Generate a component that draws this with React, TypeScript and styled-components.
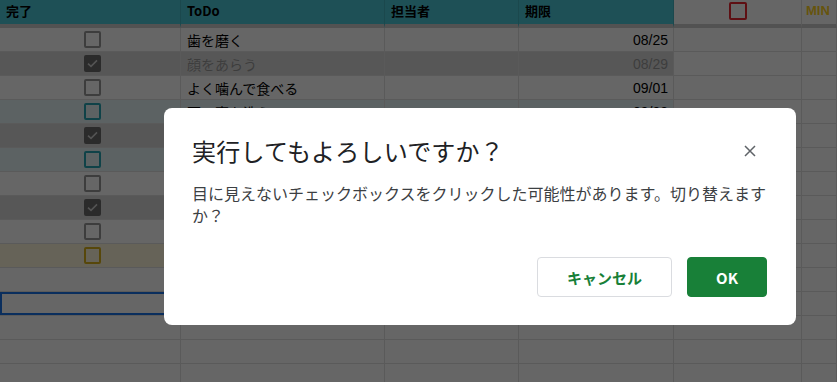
import React from "react";
import styled, { createGlobalStyle, css } from "styled-components";

const GlobalStyle = createGlobalStyle`
  html, body { margin: 0; padding: 0; background: #ffffff; overflow: hidden; }
  * { box-sizing: border-box; }
`;

type Tone = "plain" | "done" | "teal" | "yellow";
type BoxKind = "grey" | "checked" | "teal" | "yellow" | "none";

const toneBg: Record<Tone, string> = {
  plain: "#ffffff",
  done: "#dadada",
  teal: "#e6f6f8",
  yellow: "#fef7dc",
};

const Page = styled.div`
  position: relative;
  width: 837px;
  height: 382px;
  overflow: hidden;
  background: #ffffff;
  font-family: "Noto Sans CJK JP", "Noto Sans", sans-serif;
`;

const Sheet = styled.div`
  display: grid;
  grid-template-columns: 181px 204px 134px 155px 128px 35px;
  grid-template-rows: 28px;
  grid-auto-rows: 24px;
`;

const HeadCell = styled.div<{ $teal?: boolean; $center?: boolean }>`
  height: 28px;
  display: flex;
  align-items: center;
  justify-content: ${(p) => (p.$center ? "center" : "flex-start")};
  padding: 0 6px 4px;
  background: ${(p) => (p.$teal ? "#4cc8d8" : "#ffffff")};
  border-right: 1px solid ${(p) => (p.$teal ? "#44b3c1" : "#e1e1e1")};
  border-bottom: 4px solid #cdcdcd;
  font-weight: 700;
  font-size: 13px;
  color: #000;
  white-space: nowrap;
  overflow: hidden;
`;

const MinLabel = styled.span`
  font-family: "Liberation Sans", Arial, sans-serif;
  font-weight: 700;
  font-size: 13px;
  color: #ffd21f;
  margin-left: -2px;
`;

const Cell = styled.div<{ $bg: string; $align?: "left" | "center" | "right"; $muted?: boolean; $selected?: boolean }>`
  height: 24px;
  display: flex;
  align-items: center;
  justify-content: ${(p) =>
    p.$align === "center" ? "center" : p.$align === "right" ? "flex-end" : "flex-start"};
  padding: 0 5px 0 6px;
  background: ${(p) => p.$bg};
  border-right: 1px solid #e1e1e1;
  border-bottom: 1px solid #e1e1e1;
  font-size: 14px;
  color: ${(p) => (p.$muted ? "#9a9a9a" : "#000")};
  white-space: nowrap;
  overflow: hidden;
  ${(p) =>
    p.$selected &&
    css`
      box-shadow: inset 0 0 0 2px #1a73e8;
    `}
`;

const DateText = styled.span`
  font-family: "Liberation Sans", Arial, sans-serif;
  font-size: 14px;
`;

const Box = styled.span<{ $kind: BoxKind }>`
  width: 17px;
  height: 17px;
  margin-left: 3px;
  border-radius: 2px;
  display: inline-flex;
  align-items: center;
  justify-content: center;
  border: 2px solid
    ${(p) =>
      p.$kind === "teal"
        ? "#26a6b5"
        : p.$kind === "yellow"
        ? "#d9b21a"
        : p.$kind === "checked"
        ? "#6b6b6b"
        : "#9a9a9a"};
  background: ${(p) => (p.$kind === "checked" ? "#6b6b6b" : "transparent")};
`;

const RedBox = styled.span`
  width: 18px;
  height: 18px;
  border: 2px solid #ea2730;
  border-radius: 2px;
  display: inline-block;
  margin-bottom: -2px;
`;

const Overlay = styled.div`
  position: absolute;
  top: 0;
  left: 0;
  right: 0;
  bottom: 0;
  background: rgba(0, 0, 0, 0.6);
  padding: 108px 0 0 164px;
`;

const Dialog = styled.div`
  width: 632px;
  height: 217px;
  background: #ffffff;
  border-radius: 8px;
  padding: 24px 28px 28px 28px;
  display: flex;
  flex-direction: column;
`;

const TitleRow = styled.div`
  display: flex;
  align-items: center;
  justify-content: space-between;
`;

const Title = styled.h2`
  margin: 0;
  font-size: 24px;
  font-weight: 400;
  line-height: 38px;
  color: #202124;
  letter-spacing: 0.2px;
`;

const CloseButton = styled.button`
  border: none;
  background: none;
  padding: 0;
  width: 24px;
  height: 24px;
  margin-right: 6px;
  display: flex;
  align-items: center;
  justify-content: center;
`;

const Body = styled.p`
  margin: 12px 0 0;
  font-size: 16px;
  line-height: 22px;
  color: #3c4043;
`;

const Actions = styled.div`
  margin-top: auto;
  display: flex;
  justify-content: flex-end;
  gap: 15px;
  margin-right: 1px;
`;

const Btn = styled.button<{ $primary?: boolean }>`
  height: 40px;
  padding: 0;
  width: ${(p) => (p.$primary ? "80px" : "135px")};
  border-radius: 4px;
  font-family: "Noto Sans CJK JP", "Noto Sans", sans-serif;
  font-size: 15px;
  font-weight: 700;
  cursor: pointer;
  ${(p) =>
    p.$primary
      ? css`
          background: #188038;
          border: 1px solid #188038;
          color: #ffffff;
        `
      : css`
          background: #ffffff;
          border: 1px solid #dadce0;
          color: #188038;
        `}
`;

type Row = { box: BoxKind; tone: Tone; text: string; date: string; selected?: boolean };

const rows: Row[] = [
  { box: "grey", tone: "plain", text: "歯を磨く", date: "08/25" },
  { box: "checked", tone: "done", text: "顔をあらう", date: "08/29" },
  { box: "grey", tone: "plain", text: "よく噛んで食べる", date: "09/01" },
  { box: "teal", tone: "teal", text: "耳の裏を洗う", date: "09/03" },
  { box: "checked", tone: "done", text: "爪を切る", date: "09/05" },
  { box: "teal", tone: "teal", text: "早く寝る", date: "09/07" },
  { box: "grey", tone: "plain", text: "部屋を片付ける", date: "09/10" },
  { box: "checked", tone: "done", text: "靴を洗う", date: "09/12" },
  { box: "grey", tone: "plain", text: "本を読む", date: "09/15" },
  { box: "yellow", tone: "yellow", text: "散歩する", date: "09/20" },
  { box: "none", tone: "plain", text: "", date: "" },
  { box: "none", tone: "plain", text: "", date: "", selected: true },
  { box: "none", tone: "plain", text: "", date: "" },
  { box: "none", tone: "plain", text: "", date: "" },
  { box: "none", tone: "plain", text: "", date: "" },
];

const Check = () => (
  <svg width="11" height="9" viewBox="0 0 11 9">
    <path d="M1 4.6 L4 7.4 L10 1.4" stroke="#d0d0d0" strokeWidth="1.6" fill="none" />
  </svg>
);

export default function App() {
  return (
    <>
      <GlobalStyle />
      <Page>
        <Sheet>
          <HeadCell $teal>完了</HeadCell>
          <HeadCell $teal>ToDo</HeadCell>
          <HeadCell $teal>担当者</HeadCell>
          <HeadCell $teal>期限</HeadCell>
          <HeadCell $center>
            <RedBox />
          </HeadCell>
          <HeadCell>
            <MinLabel>MIN</MinLabel>
          </HeadCell>
          {rows.map((r, i) => {
            const bg = toneBg[r.tone];
            const muted = r.box === "checked";
            return (
              <React.Fragment key={i}>
                <Cell $bg={bg} $align="center" $selected={r.selected}>
                  {r.box !== "none" && <Box $kind={r.box}>{r.box === "checked" && <Check />}</Box>}
                </Cell>
                <Cell $bg={bg} $muted={muted}>{r.text}</Cell>
                <Cell $bg={bg} />
                <Cell $bg={bg} $align="right" $muted={muted}>
                  <DateText>{r.date}</DateText>
                </Cell>
                <Cell $bg="#ffffff" />
                <Cell $bg="#ffffff" />
              </React.Fragment>
            );
          })}
        </Sheet>
        <Overlay>
          <Dialog role="dialog">
            <TitleRow>
              <Title>実行してもよろしいですか？</Title>
              <CloseButton aria-label="閉じる">
                <svg width="12" height="12" viewBox="0 0 12 12">
                  <path d="M1 1 L11 11 M11 1 L1 11" stroke="#5f6368" strokeWidth="1.5" />
                </svg>
              </CloseButton>
            </TitleRow>
            <Body>
              目に見えないチェックボックスをクリックした可能性があります。切り替えますか？
            </Body>
            <Actions>
              <Btn>キャンセル</Btn>
              <Btn $primary>OK</Btn>
            </Actions>
          </Dialog>
        </Overlay>
      </Page>
    </>
  );
}
